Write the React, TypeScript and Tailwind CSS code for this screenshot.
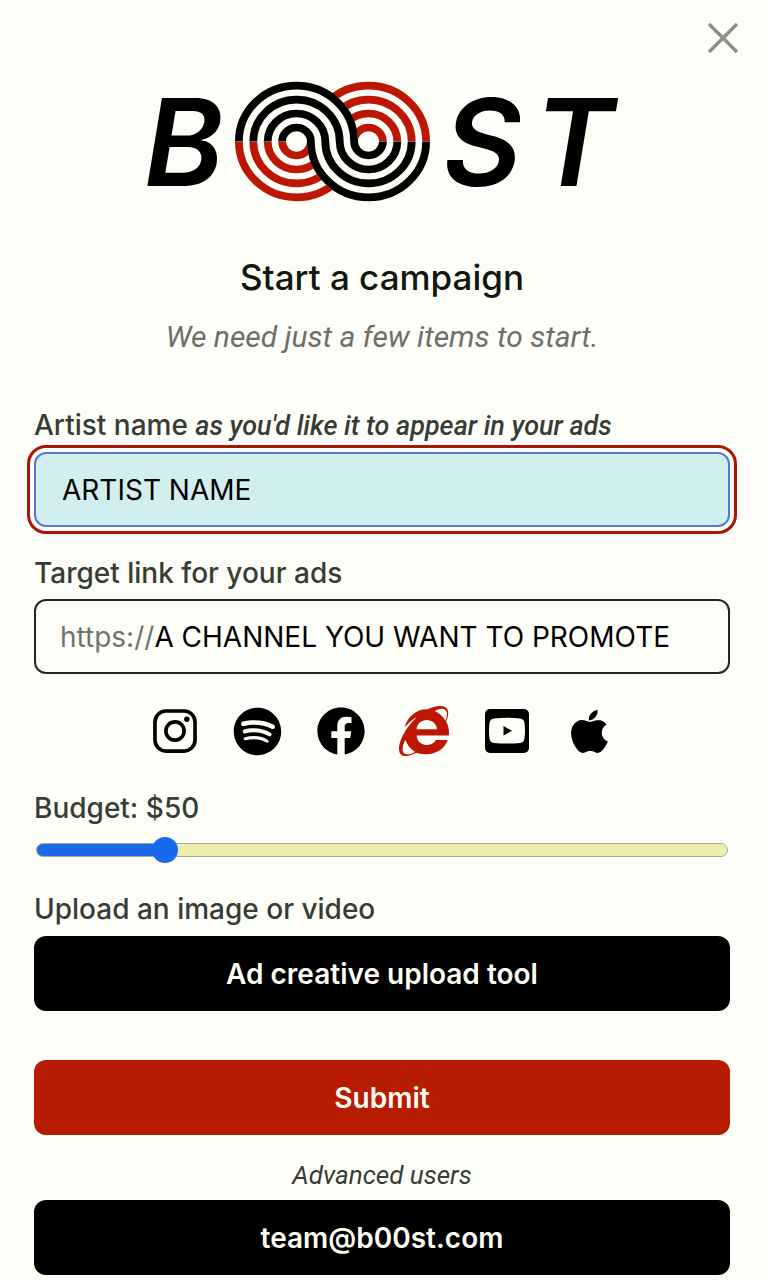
import { useState } from "react";
import { FaInternetExplorer, FaSpotify } from "react-icons/fa";
import { IoLogoApple, IoLogoFacebook, IoLogoInstagram } from "react-icons/io5";

const RADII = [14.4, 28.8, 43.2, 57.6];

function Logo() {
  const left = 148.5;
  const right = 220.5;
  return (
    <svg viewBox="-14 -20 496 160" className="w-[496px] max-w-full" role="img" aria-label="B00ST">
      <g fontFamily="Inter, sans-serif" fontStyle="italic" fontWeight="600" fontSize="121">
        <text x="-4" y="105">B</text>
        <text x="295" y="105">S</text>
        <text x="386" y="105">T</text>
      </g>
      <g fill="none" strokeWidth="7.8" transform="translate(0 60.5) scale(1 .97)">
        <g stroke="#bd1602">
          {RADII.map((r) => (
            <path
              key={r}
              d={`M${left - r} 0a${r} ${r} 0 0 0 ${2 * r} 0M${right - r} 0a${r} ${r} 0 0 1 ${2 * r} 0`}
            />
          ))}
        </g>
        <path d={`M${left - 61.5} 0a61.5 61.5 0 0 1 123 0z`} fill="#fefef9" />
        <path d={`M${right - 61.5} 0a61.5 61.5 0 0 0 123 0z`} fill="#fefef9" />
        <g stroke="#000">
          {RADII.map((r) => (
            <path
              key={r}
              d={`M${left - r} 0a${r} ${r} 0 0 1 ${2 * r} 0a${72 - r} ${72 - r} 0 0 0 ${2 * (72 - r)} 0`}
            />
          ))}
        </g>
      </g>
    </svg>
  );
}

function YoutubeSquare() {
  return (
    <svg viewBox="0 0 44 44" width="44" height="44" aria-hidden="true">
      <rect width="44" height="44" rx="5" fill="#000" />
      <path
        d="M9 9.4Q22 8 35 9.4Q39 9.8 39.4 13.5Q40.6 21.5 39.4 30Q39 33.6 35 34Q22 35.2 9 34Q5 33.6 4.6 30Q3.4 21.5 4.6 13.5Q5 9.8 9 9.4z"
        fill="#fefef9"
      />
      <path d="M18.5 17v9.6l8.5-4.8z" fill="#000" />
    </svg>
  );
}

const channels = [
  { name: "Instagram", icon: <IoLogoInstagram size={50} /> },
  { name: "Spotify", icon: <FaSpotify size={49} /> },
  { name: "Facebook", icon: <IoLogoFacebook size={54} className="shrink-0" /> },
  { name: "Website", icon: <FaInternetExplorer size={50} className="text-[#bd1602]" /> },
  { name: "YouTube", icon: <YoutubeSquare /> },
  { name: "Apple", icon: <IoLogoApple size={49} /> },
];

const MIN_BUDGET = 10;
const MAX_BUDGET = 240;

const label = "block text-[28px] leading-10 font-medium text-[#373d33]";
const field = "h-[75px] w-full rounded-xl text-[28px] text-black";
const button = "flex h-[75px] w-full items-center justify-center rounded-xl text-[28px] font-semibold text-[#fefef4]";

export default function App() {
  const [artist, setArtist] = useState("ARTIST NAME");
  const [link, setLink] = useState("A CHANNEL YOU WANT TO PROMOTE");
  const [budget, setBudget] = useState(50);
  const fill = (100 * (budget - MIN_BUDGET)) / (MAX_BUDGET - MIN_BUDGET);

  return (
    <main className="min-h-screen bg-[#fefef9] pt-[23px] pr-[38px] pb-1 pl-[34px] font-[Inter,sans-serif]">
      <div className="-mr-2 flex justify-end">
        <button type="button" aria-label="Close">
          <svg viewBox="0 0 30 30" width="30" height="30" fill="none" stroke="#8e9084" strokeWidth="3.5">
            <path d="M1 1l28 28M29 1L1 29" />
          </svg>
        </button>
      </div>
      <div className="mt-2 flex justify-center">
        <Logo />
      </div>
      <h1 className="mt-[34px] text-center text-[35px] leading-[44px] font-medium text-[#13160c]">Start a campaign</h1>
      <p className="mt-4 text-center font-[Roboto,sans-serif] text-[30px] leading-[44px] text-[#6d7066] italic">
        We need just a few items to start.
      </p>

      <form onSubmit={(e) => e.preventDefault()}>
        <label htmlFor="artist" className={`${label} mt-[46px]`}>
          Artist name{" "}
          <em className="font-[Roboto,sans-serif] text-[27px]">as you'd like it to appear in your ads</em>
        </label>
        <input
          id="artist"
          value={artist}
          onChange={(e) => setArtist(e.target.value)}
          className={`${field} mt-[6px] border-2 border-[#5878d0] bg-[#d2eff0] px-[26px] outline-3 outline-offset-4 outline-[#ad1405]`}
        />

        <label htmlFor="link" className={`${label} mt-[26px]`}>
          Target link for your ads
        </label>
        <div className={`${field} mt-[6px] flex items-center border-2 border-[#25271c] px-6`}>
          <span className="text-[#70736a]">https://</span>
          <input
            id="link"
            value={link}
            onChange={(e) => setLink(e.target.value)}
            className="min-w-0 flex-1 bg-transparent outline-none"
          />
        </div>

        <div className="mt-8 flex justify-center gap-[33px]">
          {channels.map((c) => (
            <button
              key={c.name}
              type="button"
              aria-label={c.name}
              className="flex size-[50px] items-center justify-center text-black"
            >
              {c.icon}
            </button>
          ))}
        </div>

        <label htmlFor="budget" className={`${label} mt-8`}>
          Budget: ${budget}
        </label>
        <div className="mt-[9px] flex px-[2px]">
          <input
            id="budget"
            type="range"
            min={MIN_BUDGET}
            max={MAX_BUDGET}
            value={budget}
            onChange={(e) => setBudget(Number(e.target.value))}
            style={{ backgroundImage: `linear-gradient(to right, #1b69e6 ${fill}%, #eeeeac ${fill}%)` }}
            className="my-[6px] h-[14px] w-full appearance-none rounded-full border border-[#a9a999] [&::-webkit-slider-thumb]:size-[26px] [&::-webkit-slider-thumb]:appearance-none [&::-webkit-slider-thumb]:rounded-full [&::-webkit-slider-thumb]:bg-[#1769ee]"
          />
        </div>

        <label htmlFor="upload" className={`${label} mt-[26px]`}>
          Upload an image or video
        </label>
        <button id="upload" type="button" className={`${button} mt-[7px] bg-black`}>
          Ad creative upload tool
        </button>

        <button type="submit" className={`${button} mt-[49px] bg-[#b71c02]`}>
          Submit
        </button>
      </form>

      <p className="mt-[20px] text-center font-[Roboto,sans-serif] text-[26px] leading-10 text-[#373d33] italic">
        Advanced users
      </p>
      <a href="mailto:team@b00st.com" className={`${button} mt-[5px] bg-black`}>
        team@b00st.com
      </a>
    </main>
  );
}
